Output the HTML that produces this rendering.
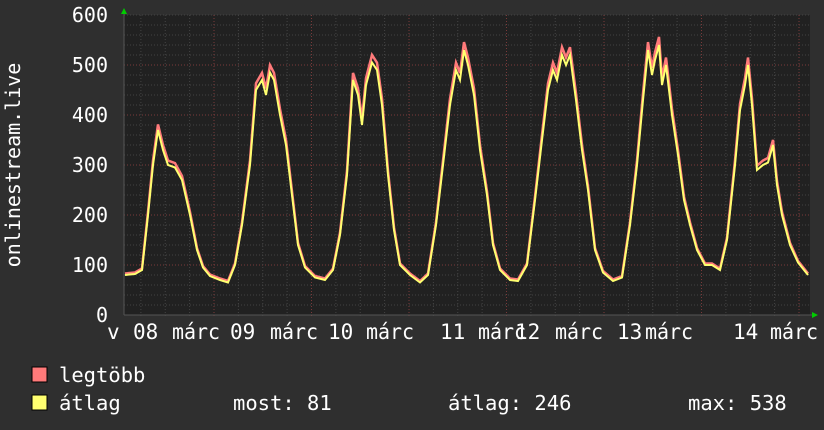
<!DOCTYPE html>
<html><head><meta charset="utf-8"><style>
body{margin:0;background:#2f2f2f;width:824px;height:430px;overflow:hidden;font-family:"DejaVu Sans Mono","Liberation Mono",monospace;color:#fff}
svg{position:absolute;left:0;top:0}
</style></head><body>
<svg width="824" height="430" xmlns="http://www.w3.org/2000/svg" font-family="DejaVu Sans Mono, Liberation Mono, monospace">
<rect x="124" y="15" width="686" height="300" fill="#212121"/>
<g id="grid"></g>
<polyline id="pmax" fill="none" stroke="#ff7a7a" stroke-width="2.5"/>
<polyline id="pavg" fill="none" stroke="#ffff70" stroke-width="2"/>
<line x1="124" y1="315" x2="814" y2="315" stroke="#555" stroke-width="1"/>
<line x1="124" y1="12" x2="124" y2="315" stroke="#555" stroke-width="1"/>
<polygon points="121,14 127,14 124,8" fill="#00cc00"/>
<polygon points="812,312 812,318 818,315" fill="#00cc00"/>
<g fill="#fff" font-size="20" text-anchor="end">
<text x="108" y="22">600</text><text x="108" y="72">500</text><text x="108" y="122">400</text>
<text x="108" y="172">300</text><text x="108" y="222">200</text><text x="108" y="272">100</text><text x="108" y="322">0</text>
</g>
<text transform="translate(20,165) rotate(-90)" fill="#fff" font-size="20" text-anchor="middle">onlinestream.live</text>
<g fill="#fff" font-size="21">
<text x="107" y="339">v</text>
<text x="133" y="339">08</text><text x="172" y="339" textLength="48" lengthAdjust="spacingAndGlyphs">márc</text>
<text x="230" y="339">09</text><text x="270" y="339" textLength="48" lengthAdjust="spacingAndGlyphs">márc</text>
<text x="328" y="339">10</text><text x="366" y="339" textLength="48" lengthAdjust="spacingAndGlyphs">márc</text>
<text x="440" y="339">11</text><text x="478" y="339" textLength="48" lengthAdjust="spacingAndGlyphs">márc</text>
<text x="515" y="339">12</text><text x="555" y="339" textLength="48" lengthAdjust="spacingAndGlyphs">márc</text>
<text x="617" y="339">13</text><text x="645" y="339" textLength="48" lengthAdjust="spacingAndGlyphs">márc</text>
<text x="733" y="339">14</text><text x="770" y="339" textLength="48" lengthAdjust="spacingAndGlyphs">márc</text>
</g>
<rect x="32" y="367" width="15" height="15" fill="#ff7a7a" stroke="#000" stroke-width="1"/>
<rect x="32" y="395" width="15" height="15" fill="#ffff70" stroke="#000" stroke-width="1"/>
<g fill="#fff" font-size="20.5">
<text x="59" y="382">legtöbb</text>
<text x="59" y="410">átlag</text>
<text x="233" y="410">most: 81</text>
<text x="448" y="410">átlag: 246</text>
<text x="688" y="410">max: 538</text>
</g>
</svg>
<script>
var g=document.getElementById('grid'),s='';
for(var y=25;y<315;y+=10){var m=((315-y)%50===0);s+='<line x1="124" x2="810" y1="'+y+'" y2="'+y+'" stroke="'+(m?'#7a3a3a':'#444')+'" stroke-dasharray="1,2"/>';}
s+='<line x1="124" x2="810" y1="15" y2="15" stroke="#444" stroke-dasharray="1,2"/>';
for(var i=-4;i<30;i++){var x=214+i*24.375;if(x<125||x>809)continue;var m=(i%4===0);s+='<line y1="15" y2="318" x1="'+x+'" x2="'+x+'" stroke="'+(m?'#7a3a3a':'#444')+'" stroke-dasharray="1,2"/>';}
g.innerHTML=s;
var k=[[125,80],[135,82],[142,90],[148,200],[153,300],[158,370],[163,330],[168,300],[175,295],[182,270],[190,200],[197,130],[203,95],[210,78],[220,70],[228,65],[235,100],[242,180],[250,300],[256,450],[262,470],[266,440],[270,485],[274,470],[280,400],[286,340],[292,240],[298,140],[305,95],[315,75],[325,70],[333,90],[340,160],[347,280],[353,470],[358,440],[362,380],[366,460],[372,505],[377,490],[382,420],[388,280],[394,170],[400,100],[410,80],[420,65],[428,80],[436,180],[443,300],[450,420],[456,490],[460,470],[464,530],[468,500],[474,440],[480,330],[487,240],[493,140],[500,90],[510,70],[518,68],[527,100],[535,230],[542,350],[548,450],[553,490],[557,470],[562,520],[566,500],[570,520],[576,430],[582,330],[588,250],[595,130],[603,85],[613,68],[622,75],[630,180],[637,300],[643,430],[648,530],[652,480],[655,510],[659,540],[662,460],[666,500],[672,400],[678,320],[684,230],[690,180],[697,130],[705,100],[712,100],[720,90],[727,150],[735,300],[740,410],[745,460],[748,500],[752,420],[757,290],[763,300],[768,305],[773,340],[777,260],[782,200],[790,140],[798,105],[808,80]];
function pts(o){return k.map(function(p){var v=p[1]>100?p[1]*o:p[1]+(o>1?3:0);return p[0]+','+(315-v/2).toFixed(1)}).join(' ')}
document.getElementById('pmax').setAttribute('points',pts(1.03));
document.getElementById('pavg').setAttribute('points',pts(1));
</script>
</body></html>
